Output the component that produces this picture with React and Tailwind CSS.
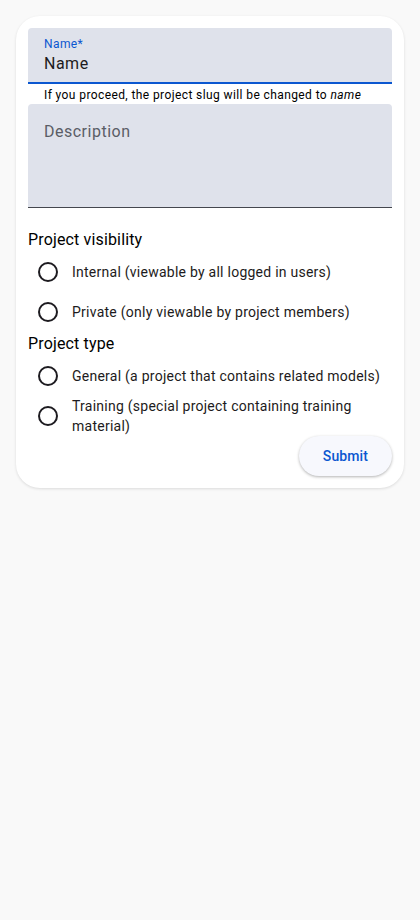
import { useState } from 'react';

function Radio({ label, name, checked, onChange }) {
  return (
    <label className="flex items-center cursor-pointer min-h-10">
      <span className="flex h-10 w-10 shrink-0 items-center justify-center">
        <span className="h-5 w-5 rounded-full border-2 border-[#1d1b20]" />
      </span>
      <input type="radio" name={name} checked={checked} onChange={onChange} className="hidden" />
      <span className="ml-1 text-sm leading-5 tracking-[0.25px] text-[#1d1b20]">{label}</span>
    </label>
  );
}

function App() {
  const [visibility, setVisibility] = useState(null);
  const [type, setType] = useState(null);

  return (
    <div className="min-h-screen bg-[#f9f9f9] p-4 font-['Roboto',sans-serif]">
      <form
        onSubmit={(e) => e.preventDefault()}
        className="rounded-3xl bg-white p-3 shadow-[0_1px_3px_rgba(0,0,0,0.12)]"
      >
        <div className="h-14 rounded-t bg-[#dfe2eb] border-b-2 border-[#0b57d0] px-4 pt-2">
          <div className="text-xs leading-4 tracking-[0.4px] text-[#0b57d0]">Name*</div>
          <div className="text-base leading-6 tracking-[0.5px] text-[#1d1b20]">Name</div>
        </div>
        <div className="h-5 px-4 pt-[3px] text-xs leading-4 tracking-[0.4px] text-black">
          If you proceed, the project slug will be changed to <i>name</i>
        </div>
        <div className="h-[104px] rounded-t bg-[#dfe2eb] border-b border-[#44474e] px-4 pt-4">
          <div className="text-base leading-6 tracking-[0.5px] text-[#5a5d66]">Description</div>
        </div>

        <div className="mt-5 text-base leading-6 tracking-[0.15px] text-black">Project visibility</div>
        <div className="flex flex-col">
          <Radio
            name="visibility"
            label="Internal (viewable by all logged in users)"
            checked={visibility === 'internal'}
            onChange={() => setVisibility('internal')}
          />
          <Radio
            name="visibility"
            label="Private (only viewable by project members)"
            checked={visibility === 'private'}
            onChange={() => setVisibility('private')}
          />
        </div>

        <div className="text-base leading-6 tracking-[0.15px] text-black">Project type</div>
        <div className="flex flex-col">
          <Radio
            name="type"
            label="General (a project that contains related models)"
            checked={type === 'general'}
            onChange={() => setType('general')}
          />
          <Radio
            name="type"
            label="Training (special project containing training material)"
            checked={type === 'training'}
            onChange={() => setType('training')}
          />
        </div>

        <div className="flex justify-end">
          <button
            type="submit"
            className="h-10 rounded-full bg-[#f7f8fd] px-6 text-sm font-medium tracking-[0.1px] text-[#0b57d0] shadow-[0_1px_3px_rgba(0,0,0,0.3)]"
          >
            Submit
          </button>
        </div>
      </form>
    </div>
  );
}

export default App;
